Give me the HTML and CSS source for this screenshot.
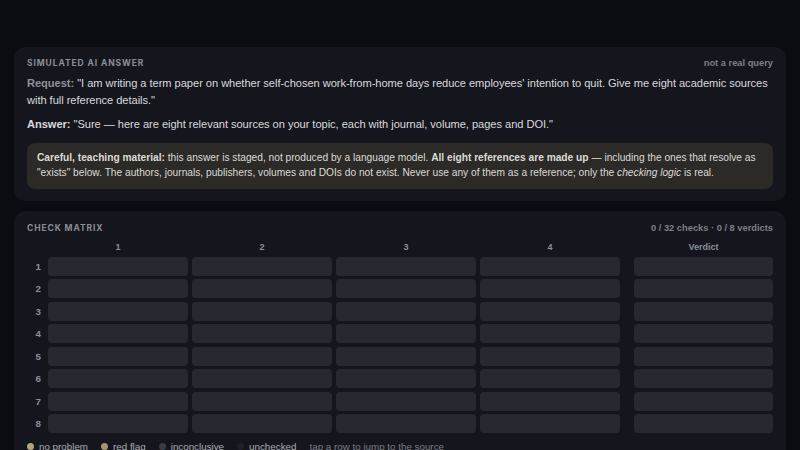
FILE: index.html
```html
<!DOCTYPE html>
<html lang="en">
<head>
    <meta charset="UTF-8">
    <meta name="viewport" content="width=device-width, initial-scale=1.0">
    <title>Source Check</title>
    <link rel="stylesheet" href="styles.css">
</head>
<body>
    <section class="card answer">
        <div class="card-head">
            <span class="label">Simulated AI answer</span>
            <span class="note">not a real query</span>
        </div>
        <p class="msg"><b class="req">Request:</b> "I am writing a term paper on whether self-chosen work-from-home days reduce employees' intention to quit. Give me eight academic sources with full reference details."</p>
        <p class="msg"><b>Answer:</b> "Sure — here are eight relevant sources on your topic, each with journal, volume, pages and DOI."</p>
        <div class="warning">
            <b>Careful, teaching material:</b> this answer is staged, not produced by a language model. <b>All eight references are made up</b> — including the ones that resolve as "exists" below. The authors, journals, publishers, volumes and DOIs do not exist. Never use any of them as a reference; only the <i>checking logic</i> is real.
        </div>
    </section>

    <section class="card matrix-card">
        <div class="card-head">
            <span class="label">Check matrix</span>
            <span class="note" id="progress">0 / 32 checks · 0 / 8 verdicts</span>
        </div>
        <div class="matrix" id="matrix">
            <span></span>
            <span class="col-head">1</span>
            <span class="col-head">2</span>
            <span class="col-head">3</span>
            <span class="col-head">4</span>
            <span class="col-head verdict">Verdict</span>
        </div>
        <div class="legend">
            <span class="key"><i class="dot ok"></i>no problem</span>
            <span class="key"><i class="dot flag"></i>red flag</span>
            <span class="key"><i class="dot unsure"></i>inconclusive</span>
            <span class="key"><i class="dot none"></i>unchecked</span>
            <span class="hint">tap a row to jump to the source</span>
        </div>
    </section>

    <script>
        // build the 8 empty rows: row number, four checks, one verdict
        const matrix = document.getElementById('matrix');
        for (let r = 1; r <= 8; r++) {
            let html = `<span class="row-num">${r}</span>`;
            for (let c = 1; c <= 4; c++) {
                html += `<span class="cell" data-row="${r}" data-col="${c}"></span>`;
            }
            html += `<span class="cell verdict" data-row="${r}"></span>`;
            matrix.insertAdjacentHTML('beforeend', html);
        }
    </script>
</body>
</html>
```

FILE: styles.css
```css
body {
    margin: 0;
    padding: 47px 14px 0;
    background-color: #0a0c12;
    color: #d9d9de;
    font-family: "Liberation Sans", Arial, sans-serif;
    font-size: 11.1px;
}
.card {
    background-color: #15161d;
    border-radius: 12px;
    padding: 10px 13px 12px;
    margin-bottom: 10px;
}
.matrix-card {
    padding-top: 11px;
}
.card-head {
    display: flex;
    justify-content: space-between;
    align-items: center;
    line-height: 12px;
    margin-bottom: 6px;
}
.label {
    font-family: Inter, sans-serif;
    font-size: 8.5px;
    font-weight: 700;
    letter-spacing: 0.9px;
    text-transform: uppercase;
    color: #8c8e97;
}
.note {
    font-size: 9.3px;
    font-weight: 700;
    color: #7d7f88;
}
.msg {
    margin: 0 0 7px;
    line-height: 17px;
    letter-spacing: -0.04px;
}
.req {
    color: #8f9199;
}
.warning {
    margin-top: 10px;
    padding: 7px 10px 9px;
    background-color: #2b2a26;
    border-radius: 8px;
    font-size: 10.2px;
    line-height: 15px;
    color: #dcdbd6;
}
.matrix-card .card-head {
    margin-bottom: 7px;
}
.matrix {
    display: grid;
    grid-template-columns: 17px repeat(4, 1fr) 149px;
    grid-auto-rows: 19px;
    grid-template-rows: 12px;
    column-gap: 4px;
    row-gap: 3.5px;
}
.col-head {
    text-align: center;
    font-size: 9px;
    font-weight: 700;
    color: #8c8e97;
    line-height: 12px;
}
.row-num {
    text-align: right;
    padding-right: 3px;
    font-size: 9.8px;
    font-weight: 700;
    color: #8c8e97;
    line-height: 19px;
}
.verdict {
    margin-left: 10px;
}
.cell {
    background-color: #272830;
    border-radius: 4px;
}
.legend {
    display: flex;
    align-items: center;
    gap: 13px;
    margin-top: 8px;
    font-size: 9.8px;
    color: #a9abb2;
}
.key {
    display: flex;
    align-items: center;
    gap: 5px;
}
.dot {
    width: 7px;
    height: 7px;
    border-radius: 50%;
}
.dot.ok { background-color: #b5a27c; }
.dot.flag { background-color: #a8946c; }
.dot.unsure { background-color: #3a3c46; }
.dot.none { background-color: #1f2128; }
.hint {
    color: #7a7c84;
}
```
